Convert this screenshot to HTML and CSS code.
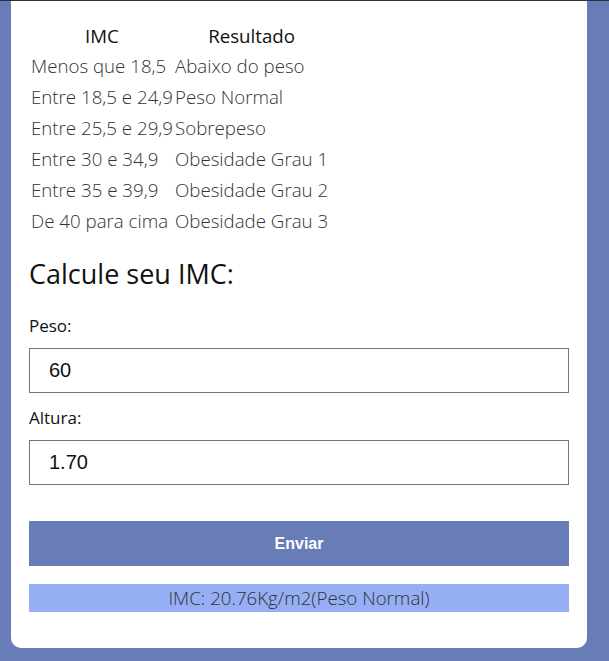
FILE: index.html
```html
<!DOCTYPE html>
<html lang="pt">
<head>
<meta charset="utf-8">
<title>IMC</title>
<link rel="stylesheet" href="styles.css">
</head>
<body>
<div class="topline"></div>
<main class="card">
  <table class="tabela">
    <thead>
      <tr><th>IMC</th><th>Resultado</th></tr>
    </thead>
    <tbody>
      <tr><td>Menos que 18,5</td><td>Abaixo do peso</td></tr>
      <tr><td>Entre 18,5 e 24,9</td><td>Peso Normal</td></tr>
      <tr><td>Entre 25,5 e 29,9</td><td>Sobrepeso</td></tr>
      <tr><td>Entre 30 e 34,9</td><td>Obesidade Grau 1</td></tr>
      <tr><td>Entre 35 e 39,9</td><td>Obesidade Grau 2</td></tr>
      <tr><td>De 40 para cima</td><td>Obesidade Grau 3</td></tr>
    </tbody>
  </table>
  <h2 class="titulo">Calcule seu IMC:</h2>
  <form class="form">
    <label class="rotulo" for="peso">Peso:</label>
    <input class="campo" id="peso" type="text" value="60">
    <label class="rotulo" for="altura">Altura:</label>
    <input class="campo" id="altura" type="text" value="1.70">
    <button class="botao" type="button">Enviar</button>
  </form>
  <div class="resultado">IMC: 20.76Kg/m2(Peso Normal)</div>
</main>
</body>
</html>
```
FILE: styles.css
```css
html, body {
  margin: 0;
  padding: 0;
}
body {
  background: #687cb7;
  font-family: "Open Sans", sans-serif;
  color: #222;
  height: 661px;
  overflow: hidden;
}
.topline {
  height: 1px;
  background: #2c3039;
}
.card {
  margin: 0 22px 0 11px;
  background: #fff;
  border-radius: 0 0 10px 10px;
  padding: 20px 18px 36px 18px;
}
.tabela {
  border-collapse: collapse;
  margin-left: 1px;
}
.tabela th {
  font-weight: 400;
  font-size: 18.7px;
  line-height: 29px;
  padding: 0 1px;
  color: #111;
}
.tabela td {
  font-weight: 300;
  font-size: 18.7px;
  line-height: 31px;
  padding: 0 1px;
  color: #333;
}
.titulo {
  font-weight: 400;
  font-size: 27px;
  line-height: 36px;
  margin: 20px 0 22px;
  color: #111;
}
.form {
  display: flex;
  flex-direction: column;
}
.rotulo {
  font-size: 17px;
  line-height: 22px;
  color: #111;
  padding-top: 1px;
  margin-bottom: 10px;
}
.campo {
  box-sizing: border-box;
  height: 45px;
  border: 1px solid #777;
  font-family: "Liberation Sans", Arial, sans-serif;
  font-size: 20px;
  padding: 0 19px;
  color: #111;
  margin: 0 0 13px;
}
.rotulo + .campo {
  margin-top: 1px;
}
.botao {
  height: 45px;
  margin-top: 23px;
  border: none;
  background: #687cb7;
  color: #fff;
  font-family: "Liberation Sans", Arial, sans-serif;
  font-weight: 700;
  font-size: 16px;
}
.resultado {
  margin-top: 18px;
  background: #96aef4;
  height: 28px;
  line-height: 28px;
  text-align: center;
  font-weight: 300;
  font-size: 18.7px;
  color: #333;
}
```
